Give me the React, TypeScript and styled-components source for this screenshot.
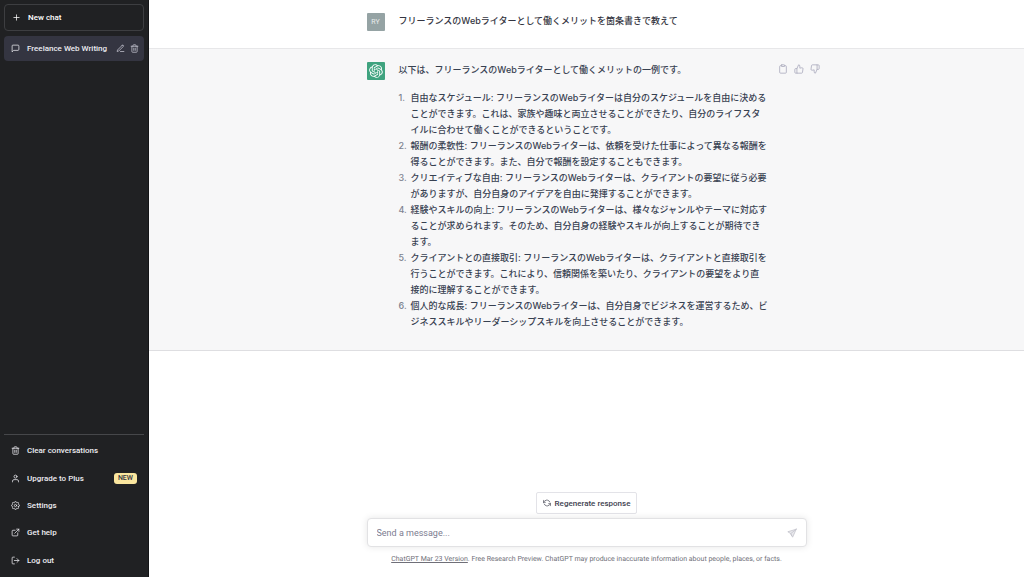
import React from "react";
import styled, { createGlobalStyle } from "styled-components";
import {
  FiPlus,
  FiMessageSquare,
  FiEdit3,
  FiTrash2,
  FiUser,
  FiSettings,
  FiExternalLink,
  FiLogOut,
  FiClipboard,
  FiThumbsUp,
  FiThumbsDown,
  FiRefreshCcw,
} from "react-icons/fi";

const GlobalStyle = createGlobalStyle`
  *, *::before, *::after { box-sizing: border-box; }
  body {
    margin: 0;
    background: #fff;
    font-family: Roboto, "Noto Sans CJK JP", sans-serif;
    font-size: 9px;
    font-weight: 500;
  }
  button, input { font: inherit; }
  button { cursor: pointer; }
`;

const Page = styled.div`
  display: flex;
  min-height: 100vh;
`;

const Sidebar = styled.aside`
  display: flex;
  flex-direction: column;
  flex: 0 0 149px;
  min-width: 0;
  padding: 4px 4px 3px 4px;
  background: #202123;
  border-right: 1px solid #141517;
  color: #ececf1;
  font-size: 8px;
`;

const NewChat = styled.button`
  display: flex;
  align-items: center;
  gap: 7px;
  height: 27px;
  padding: 0 7px;
  background: transparent;
  border: 1px solid #3d3e41;
  border-radius: 4px;
  color: #fff;
`;

const Conversations = styled.nav`
  flex: 1;
  padding-top: 5px;
`;

const Conversation = styled.div`
  display: flex;
  align-items: center;
  gap: 5px;
  height: 25px;
  padding: 0 5px 0 7px;
  background: #343541;
  border-radius: 4px;
`;

const ConversationLink = styled.a`
  display: flex;
  flex: 1;
  align-items: center;
  gap: 7px;
  min-width: 0;
  color: inherit;
  text-decoration: none;
  white-space: nowrap;
`;

const IconButton = styled.button<{ $tone?: string }>`
  display: flex;
  padding: 0;
  background: none;
  border: 0;
  color: ${({ $tone }) => $tone ?? "#c5c5d2"};
`;

const Menu = styled.nav`
  display: grid;
  grid-auto-rows: 1fr;
  min-height: 140px;
  padding-top: 2px;
  border-top: 1px solid #46474a;
`;

const MenuItem = styled.a`
  display: flex;
  align-items: center;
  gap: 7px;
  padding: 0 7px;
  color: inherit;
  text-decoration: none;
`;

const Badge = styled.span`
  margin-left: auto;
  padding: 0 4px;
  background: #fae69e;
  border-radius: 3px;
  color: #343541;
  font-size: 7px;
  line-height: 11px;
`;

const Main = styled.main`
  display: flex;
  flex: 1;
  flex-direction: column;
  min-width: 0;
`;

const Turn = styled.section<{ $assistant?: boolean }>`
  padding: 13px 16px ${({ $assistant }) => ($assistant ? 20 : 17)}px;
  background: ${({ $assistant }) => ($assistant ? "#f7f7f8" : "#fff")};
  border-bottom: 1px solid ${({ $assistant }) => ($assistant ? "#dedee1" : "#e7e7e9")};
`;

const TurnBody = styled.div`
  display: flex;
  align-items: flex-start;
  max-width: 440px;
  margin: 0 auto;
`;

const Avatar = styled.div<{ $color: string }>`
  display: flex;
  align-items: center;
  justify-content: center;
  flex: 0 0 18px;
  height: 18px;
  margin-right: 14px;
  background: ${({ $color }) => $color};
  border-radius: 1px;
  color: #e8ecec;
  font-size: 7px;
  font-weight: 400;
`;

const Message = styled.div<{ $color: string }>`
  flex: 0 1 370px;
  color: ${({ $color }) => $color};
  font-family: Inter, "Noto Sans CJK JP", sans-serif;
  line-height: 16px;

  p { margin: 0; }
`;

const Points = styled.ol`
  margin: 12px 0 0;
  padding: 0 0 0 12px;
  list-style: none;
  counter-reset: point;
`;

const Point = styled.li`
  display: flex;
  margin-left: -12px;
  white-space: pre-line;
  counter-increment: point;

  &::before {
    content: counter(point) ".";
    flex: 0 0 12px;
    color: #7d8390;
  }
`;

const Actions = styled.div`
  display: flex;
  gap: 6px;
  margin: 2px -13px 0 auto;
`;

const Composer = styled.footer`
  display: flex;
  flex-direction: column;
  align-items: center;
  margin-top: auto;
  padding: 0 16px 12px;
`;

const Regenerate = styled.button`
  display: flex;
  align-items: center;
  gap: 4px;
  height: 22px;
  padding: 0 6px;
  background: #fff;
  border: 1px solid #e3e3e8;
  border-radius: 2px;
  color: #40414f;
  font-size: 8px;
`;

const MessageForm = styled.form`
  display: flex;
  align-items: center;
  width: 100%;
  max-width: 440px;
  height: 29px;
  margin: 4px 0 6px;
  padding: 0 9px;
  background: #fff;
  border: 1px solid #e2e2e4;
  border-radius: 4px;
  box-shadow: 0 0 7px rgba(0, 0, 0, 0.1);
`;

const MessageInput = styled.input`
  flex: 1;
  min-width: 0;
  padding: 0;
  background: transparent;
  border: 0;
  outline: 0;
  color: #343541;
  font-weight: 400;

  &::placeholder { color: #7c7c90; opacity: 1; }
`;

const Notice = styled.p`
  margin: 0;
  color: #6f6f78;
  font-size: 7px;
  font-weight: 400;
  line-height: 12px;
  text-rendering: geometricPrecision;

  a { color: inherit; }
`;

const points = [
  "自由なスケジュール: フリーランスのWebライターは自分のスケジュールを自由に決めることができます。これは、家族や趣味と両立させることができたり、自分のライフスタイルに合わせて働くことができるということです。",
  "報酬の柔軟性: フリーランスのWebライターは、依頼を受けた仕事によって異なる報酬を得ることができます。また、自分で報酬を設定することもできます。",
  "クリエイティブな自由: フリーランスのWebライターは、クライアントの要望に従う必要がありますが、自分自身のアイデアを自由に発揮することができます。",
  "経験やスキルの向上: フリーランスのWebライターは、様々なジャンルやテーマに対応することが求められます。そのため、自分自身の経験やスキルが向上することが期待できます。",
  "クライアントとの直接取引: フリーランスのWebライターは、クライアントと直接取引を行うことができます。これにより、信頼関係を築いたり、クライアントの要望をより直\n接的に理解することができます。",
  "個人的な成長: フリーランスのWebライターは、自分自身でビジネスを運営するため、ビジネススキルやリーダーシップスキルを向上させることができます。",
];

const GptLogo = () => (
  <svg width="14" height="14" viewBox="0 0 41 41" fill="#fff" aria-hidden="true">
    <path d="M37.532 16.87a9.963 9.963 0 0 0-.856-8.184 10.078 10.078 0 0 0-10.855-4.835A9.964 9.964 0 0 0 18.306.5a10.079 10.079 0 0 0-9.614 6.977 9.967 9.967 0 0 0-6.664 4.834 10.08 10.08 0 0 0 1.24 11.817 9.965 9.965 0 0 0 .856 8.185 10.079 10.079 0 0 0 10.855 4.835 9.965 9.965 0 0 0 7.516 3.35 10.078 10.078 0 0 0 9.617-6.981 9.967 9.967 0 0 0 6.663-4.834 10.079 10.079 0 0 0-1.243-11.813zM22.498 37.886a7.474 7.474 0 0 1-4.799-1.735c.061-.033.168-.091.237-.134l7.964-4.6a1.294 1.294 0 0 0 .655-1.134V19.054l3.366 1.944a.12.12 0 0 1 .066.092v9.299a7.505 7.505 0 0 1-7.49 7.496zM6.392 31.006a7.471 7.471 0 0 1-.894-5.023c.06.036.162.099.237.141l7.964 4.6a1.297 1.297 0 0 0 1.308 0l9.724-5.614v3.888a.12.12 0 0 1-.048.103l-8.051 4.649a7.504 7.504 0 0 1-10.24-2.744zM4.297 13.62A7.469 7.469 0 0 1 8.2 10.333c0 .068-.004.19-.004.274v9.201a1.294 1.294 0 0 0 .654 1.132l9.723 5.614-3.366 1.944a.12.12 0 0 1-.114.01L7.04 23.856a7.504 7.504 0 0 1-2.743-10.237zm27.658 6.437-9.724-5.615 3.367-1.943a.121.121 0 0 1 .113-.01l8.052 4.648a7.498 7.498 0 0 1-1.158 13.528v-9.476a1.293 1.293 0 0 0-.65-1.132zm3.35-5.043c-.059-.037-.162-.099-.236-.141l-7.965-4.6a1.298 1.298 0 0 0-1.308 0l-9.723 5.614v-3.888a.12.12 0 0 1 .048-.103l8.05-4.645a7.497 7.497 0 0 1 11.135 7.763zm-21.063 6.929-3.367-1.944a.12.12 0 0 1-.065-.092v-9.299a7.497 7.497 0 0 1 12.293-5.756 6.94 6.94 0 0 0-.236.134l-7.965 4.6a1.294 1.294 0 0 0-.654 1.132l-.006 11.225zm1.829-3.943 4.33-2.501 4.332 2.5v5l-4.331 2.5-4.331-2.5v-5z" />
  </svg>
);

const SendIcon = () => (
  <svg width="10" height="10" viewBox="0 0 24 24" fill="none" stroke="currentColor" strokeWidth="2" strokeLinecap="round" strokeLinejoin="round" aria-hidden="true">
    <path fill="#e9e9ed" d="M22 3 2 9l7 4.500L13.500 22 22 3Z" />
    <path d="M22 3 9 13.500l2 5" />
  </svg>
);

export default function App() {
  return (
    <>
      <GlobalStyle />
      <Page>
        <Sidebar>
          <NewChat type="button"><FiPlus size={9} />New chat</NewChat>
          <Conversations aria-label="Conversations">
            <Conversation>
              <ConversationLink href="#chat"><FiMessageSquare size={9} />Freelance Web Writing</ConversationLink>
              <IconButton type="button" aria-label="Rename"><FiEdit3 size={9} /></IconButton>
              <IconButton type="button" aria-label="Delete"><FiTrash2 size={9} /></IconButton>
            </Conversation>
          </Conversations>
          <Menu aria-label="Account">
            <MenuItem href="#clear"><FiTrash2 size={9} />Clear conversations</MenuItem>
            <MenuItem href="#plus"><FiUser size={9} />Upgrade to Plus<Badge>NEW</Badge></MenuItem>
            <MenuItem href="#settings"><FiSettings size={9} />Settings</MenuItem>
            <MenuItem href="#help"><FiExternalLink size={9} />Get help</MenuItem>
            <MenuItem href="#logout"><FiLogOut size={9} />Log out</MenuItem>
          </Menu>
        </Sidebar>
        <Main>
          <Turn>
            <TurnBody>
              <Avatar $color="#95a3a4">RY</Avatar>
              <Message $color="#343541"><p>フリーランスのWebライターとして働くメリットを箇条書きで教えて</p></Message>
            </TurnBody>
          </Turn>
          <Turn $assistant>
            <TurnBody>
              <Avatar $color="#3fa37f"><GptLogo /></Avatar>
              <Message $color="#374151">
                <p>以下は、フリーランスのWebライターとして働くメリットの一例です。</p>
                <Points>
                  {points.map((point) => <Point key={point}><span>{point}</span></Point>)}
                </Points>
              </Message>
              <Actions>
                <IconButton type="button" $tone="#acacbe" aria-label="Copy"><FiClipboard size={10} /></IconButton>
                <IconButton type="button" $tone="#acacbe" aria-label="Good response"><FiThumbsUp size={10} /></IconButton>
                <IconButton type="button" $tone="#acacbe" aria-label="Bad response"><FiThumbsDown size={10} /></IconButton>
              </Actions>
            </TurnBody>
          </Turn>
          <Composer>
            <Regenerate type="button"><FiRefreshCcw size={8} />Regenerate response</Regenerate>
            <MessageForm onSubmit={(event) => event.preventDefault()}>
              <MessageInput aria-label="Message" placeholder="Send a message..." />
              <IconButton type="submit" $tone="#c4c4cc" aria-label="Send"><SendIcon /></IconButton>
            </MessageForm>
            <Notice><a href="#version">ChatGPT Mar 23 Version</a>. Free Research Preview. ChatGPT may produce inaccurate information about people, places, or facts.</Notice>
          </Composer>
        </Main>
      </Page>
    </>
  );
}
